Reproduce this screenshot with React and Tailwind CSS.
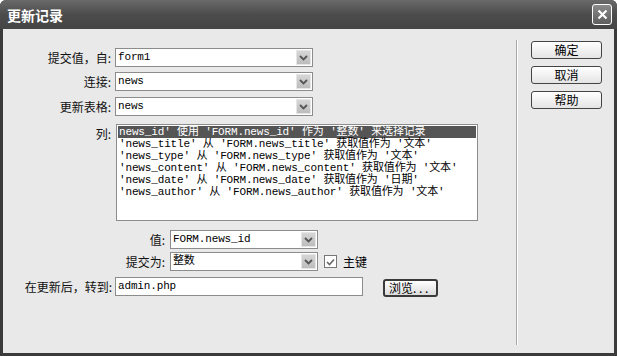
const cjk = "font-['Noto_Sans_CJK_SC',sans-serif]";
const mono = "font-['Liberation_Mono','Noto_Sans_CJK_SC',monospace]";

const Chevron = () => (
  <svg width="9" height="6" viewBox="0 0 9 6">
    <path d="M1 1 L4.5 4.5 L8 1" fill="none" stroke="#555" strokeWidth="1.8" />
  </svg>
);

const Select = ({ value, className }) => (
  <div className={`h-[19px] bg-white border border-[#8c8c8c] flex items-center ${className}`}>
    <span className={`flex-1 pl-[2px] text-[11px] tracking-[-0.15px] leading-none text-black ${mono}`}>{value}</span>
    <div className="w-[15px] h-[15px] mr-[1px] bg-gradient-to-b from-[#d6d6d6] to-[#bcbcbc] border border-[#e6e6e6] flex items-center justify-center">
      <Chevron />
    </div>
  </div>
);

const Label = ({ children, className }) => (
  <span className={`text-right text-[12px] leading-none text-[#111] ${cjk} ${className}`}>{children}</span>
);

const rows = [
  "'news_title' 从 'FORM.news_title' 获取值作为 '文本'",
  "'news_type' 从 'FORM.news_type' 获取值作为 '文本'",
  "'news_content' 从 'FORM.news_content' 获取值作为 '文本'",
  "'news_date' 从 'FORM.news_date' 获取值作为 '日期'",
  "'news_author' 从 'FORM.news_author' 获取值作为 '文本'",
];

const Button = ({ children }) => (
  <button className={`w-[71px] h-[18px] rounded-[3px] border border-[#444] bg-gradient-to-b from-white to-[#e4e4e4] text-[12px] leading-none text-black ${cjk}`}>
    {children}
  </button>
);

export default function App() {
  return (
    <div className="w-[617px] h-[356px] bg-[#3b3b3b] rounded-t-[6px] flex flex-col overflow-hidden">
      {/* Title bar */}
      <div className="h-[29px] flex items-center justify-between bg-gradient-to-b from-[#6a6a6a] via-[#4c4c4c] to-[#454545] px-[7px]">
        <span className={`text-white font-bold text-[14px] leading-none ${cjk}`}>更新记录</span>
        <div className="w-[20px] h-[21px] mr-[-2px] rounded-[3px] border border-white bg-gradient-to-b from-[#8a8a8a] to-[#5e5e5e] flex items-center justify-center">
          <svg width="11" height="11" viewBox="0 0 11 11">
            <path d="M1.5 1.5 L9.5 9.5 M9.5 1.5 L1.5 9.5" stroke="white" strokeWidth="2.2" />
          </svg>
        </div>
      </div>

      {/* Body */}
      <div className="flex-1 mx-[3px] mb-[3px] bg-[#e9e9e9] flex">
        {/* Form */}
        <div className="w-[513px] flex flex-col">
          <div className="flex items-center mt-[19px]">
            <Label className="w-[108px]">提交值，自:</Label>
            <Select value="form1" className="ml-[4px] w-[198px]" />
          </div>
          <div className="flex items-center mt-[5px]">
            <Label className="w-[108px]">连接:</Label>
            <Select value="news" className="ml-[4px] w-[198px]" />
          </div>
          <div className="flex items-center mt-[6px]">
            <Label className="w-[108px]">更新表格:</Label>
            <Select value="news" className="ml-[4px] w-[198px]" />
          </div>
          <div className="flex items-start mt-[8px]">
            <Label className="w-[108px] pt-[4px]">列:</Label>
            <div className="ml-[5px] w-[362px] h-[97px] bg-white border border-[#8c8c8c] pt-[1px] px-[1px]">
              <div className={`h-[12px] bg-[#555] text-white pl-[1px] text-[11px] tracking-[-0.15px] leading-[12px] whitespace-nowrap ${mono}`}>
                news_id' 使用 'FORM.news_id' 作为 '整数' 来选择记录
              </div>
              {rows.map((r) => (
                <div key={r} className={`h-[12px] text-black pl-[1px] text-[11px] tracking-[-0.15px] leading-[12px] whitespace-nowrap ${mono}`}>
                  {r}
                </div>
              ))}
            </div>
          </div>
          <div className="flex items-center mt-[9px]">
            <Label className="w-[162px]">值:</Label>
            <Select value="FORM.news_id" className="ml-[5px] w-[148px]" />
          </div>
          <div className="flex items-center mt-[3px]">
            <Label className="w-[162px]">提交为:</Label>
            <Select value="整数" className="ml-[5px] w-[148px]" />
            <div className="ml-[6px] w-[13px] h-[13px] bg-white border border-[#777] flex items-center justify-center">
              <svg width="9" height="8" viewBox="0 0 9 8">
                <path d="M1 4 L3.5 6.5 L8 1.5" fill="none" stroke="#666" strokeWidth="1.6" />
              </svg>
            </div>
            <span className={`ml-[6px] text-[12px] leading-none text-black ${cjk}`}>主键</span>
          </div>
          <div className="flex items-center mt-[5px]">
            <Label className="w-[109px]">在更新后，转到:</Label>
            <div className="ml-[3px] w-[248px] h-[19px] bg-white border border-[#8c8c8c] flex items-center">
              <span className={`pl-[2px] text-[11px] tracking-[-0.15px] leading-none text-black ${mono}`}>admin.php</span>
            </div>
            <button className={`ml-[20px] mt-[3px] w-[55px] h-[18px] rounded-[3px] border-2 border-[#3a3a3a] bg-gradient-to-b from-white to-[#dcdcdc] text-left pl-[4px] text-[12px] leading-none text-black ${cjk}`}>
              浏览. . .
            </button>
          </div>
        </div>

        {/* Separator */}
        <div className="mt-[11px] mb-[8px] w-[2px] border-l border-[#a8a8a8] bg-white" />

        {/* Buttons */}
        <div className="flex-1 flex flex-col gap-[7px] pl-[13px] pt-[12px]">
          <Button>确定</Button>
          <Button>取消</Button>
          <Button>帮助</Button>
        </div>
      </div>
    </div>
  );
}
